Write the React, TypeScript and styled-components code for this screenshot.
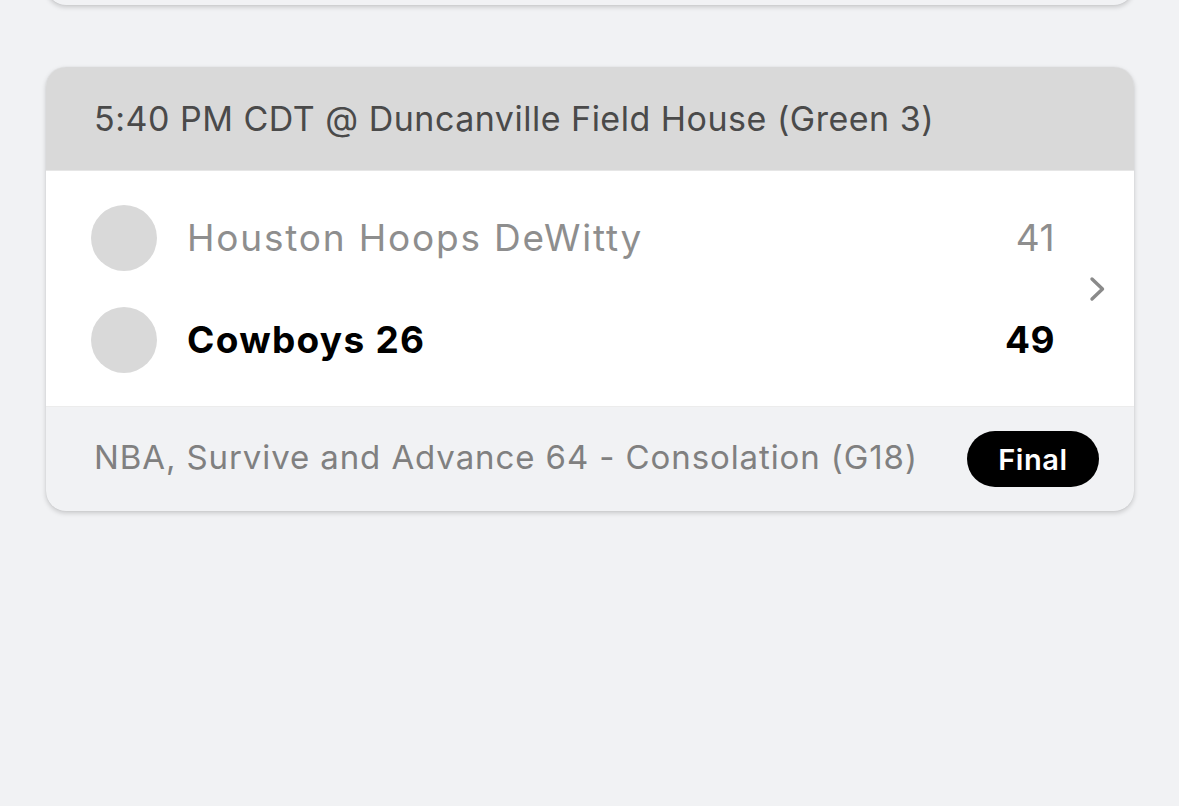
import styled, { createGlobalStyle } from "styled-components";

const GlobalStyle = createGlobalStyle`
    html, body {
        margin: 0;
        padding: 0;
        background: #f1f2f4;
        font-family: Inter, "Noto Sans", "Liberation Sans", sans-serif;
    }
`;

const Page = styled.div`
    display: flex;
    flex-direction: column;
    gap: 62px;
    padding: 0 45px 0 46px;
    margin-top: -95px;
    height: 901px;
    overflow: hidden;
`;

const Card = styled.div<{ $ghost?: boolean }>`
    border-radius: 20px;
    overflow: hidden;
    background: #f1f2f4;
    box-shadow: 0 2px 5px rgba(0, 0, 0, 0.18), 0 0 1px rgba(0, 0, 0, 0.12);
    height: ${({ $ghost }) => ($ghost ? "100px" : "auto")};
    flex-shrink: 0;
`;

const CardHeader = styled.div`
    background: #d9d9d9;
    height: 103px;
    display: flex;
    align-items: center;
    padding-left: 48px;
    border-bottom: 1px solid #e6e6e6;
    font-size: 34px;
    color: #4a4a4a;
    letter-spacing: 0.5px;
`;

const CardBody = styled.div`
    background: #ffffff;
    height: 235px;
    display: flex;
    align-items: center;
    border-bottom: 1px solid #ececec;
`;

const Teams = styled.div`
    flex: 1;
    display: flex;
    flex-direction: column;
    gap: 36px;
    padding-left: 45px;
`;

const TeamRow = styled.div`
    display: flex;
    align-items: center;
    height: 66px;
`;

const Logo = styled.div`
    width: 66px;
    height: 66px;
    border-radius: 50%;
    background: #d9d9d9;
    flex-shrink: 0;
`;

const TeamName = styled.div<{ $winner?: boolean }>`
    flex: 1;
    margin-left: 30px;
    font-size: 37px;
    font-weight: ${({ $winner }) => ($winner ? 700 : 400)};
    color: ${({ $winner }) => ($winner ? "#000000" : "#8e8e8e")};
    letter-spacing: ${({ $winner }) => ($winner ? "1.3px" : "1.8px")};
`;

const Score = styled(TeamName)`
    flex: none;
    margin-left: 0;
    letter-spacing: 0.5px;
`;

const ChevronCol = styled.div`
    width: 79px;
    display: flex;
    justify-content: center;
    padding-left: 4px;
    box-sizing: border-box;
`;

const CardFooter = styled.div`
    height: 104px;
    display: flex;
    align-items: center;
    justify-content: space-between;
    padding: 0 35px 0 48px;
`;

const Division = styled.div`
    font-size: 33px;
    color: #808080;
    letter-spacing: 0.9px;
    margin-top: -4px;
`;

const StatusBadge = styled.div`
    background: #000000;
    color: #ffffff;
    border-radius: 28px;
    height: 56px;
    width: 132px;
    display: flex;
    align-items: center;
    justify-content: center;
    font-size: 29px;
    font-weight: 600;
    letter-spacing: 0.6px;
`;

const Chevron = () => (
    <svg width="18" height="26" viewBox="0 0 18 26" fill="none">
        <path d="M4 3 L14.5 13 L4 23" stroke="#8a8a8a" strokeWidth="3.4" strokeLinecap="round" strokeLinejoin="round" />
    </svg>
);

const teams = [
    { name: "Houston Hoops DeWitty", score: 41, winner: false },
    { name: "Cowboys 26", score: 49, winner: true },
];

export default function App() {
    return (
        <>
            <GlobalStyle />
            <Page>
                <Card $ghost />
                <Card>
                    <CardHeader>5:40 PM CDT @ Duncanville Field House (Green 3)</CardHeader>
                    <CardBody>
                        <Teams>
                            {teams.map((t) => (
                                <TeamRow key={t.name}>
                                    <Logo />
                                    <TeamName $winner={t.winner}>{t.name}</TeamName>
                                    <Score $winner={t.winner}>{t.score}</Score>
                                </TeamRow>
                            ))}
                        </Teams>
                        <ChevronCol>
                            <Chevron />
                        </ChevronCol>
                    </CardBody>
                    <CardFooter>
                        <Division>NBA, Survive and Advance 64 - Consolation (G18)</Division>
                        <StatusBadge>Final</StatusBadge>
                    </CardFooter>
                </Card>
            </Page>
        </>
    );
}
